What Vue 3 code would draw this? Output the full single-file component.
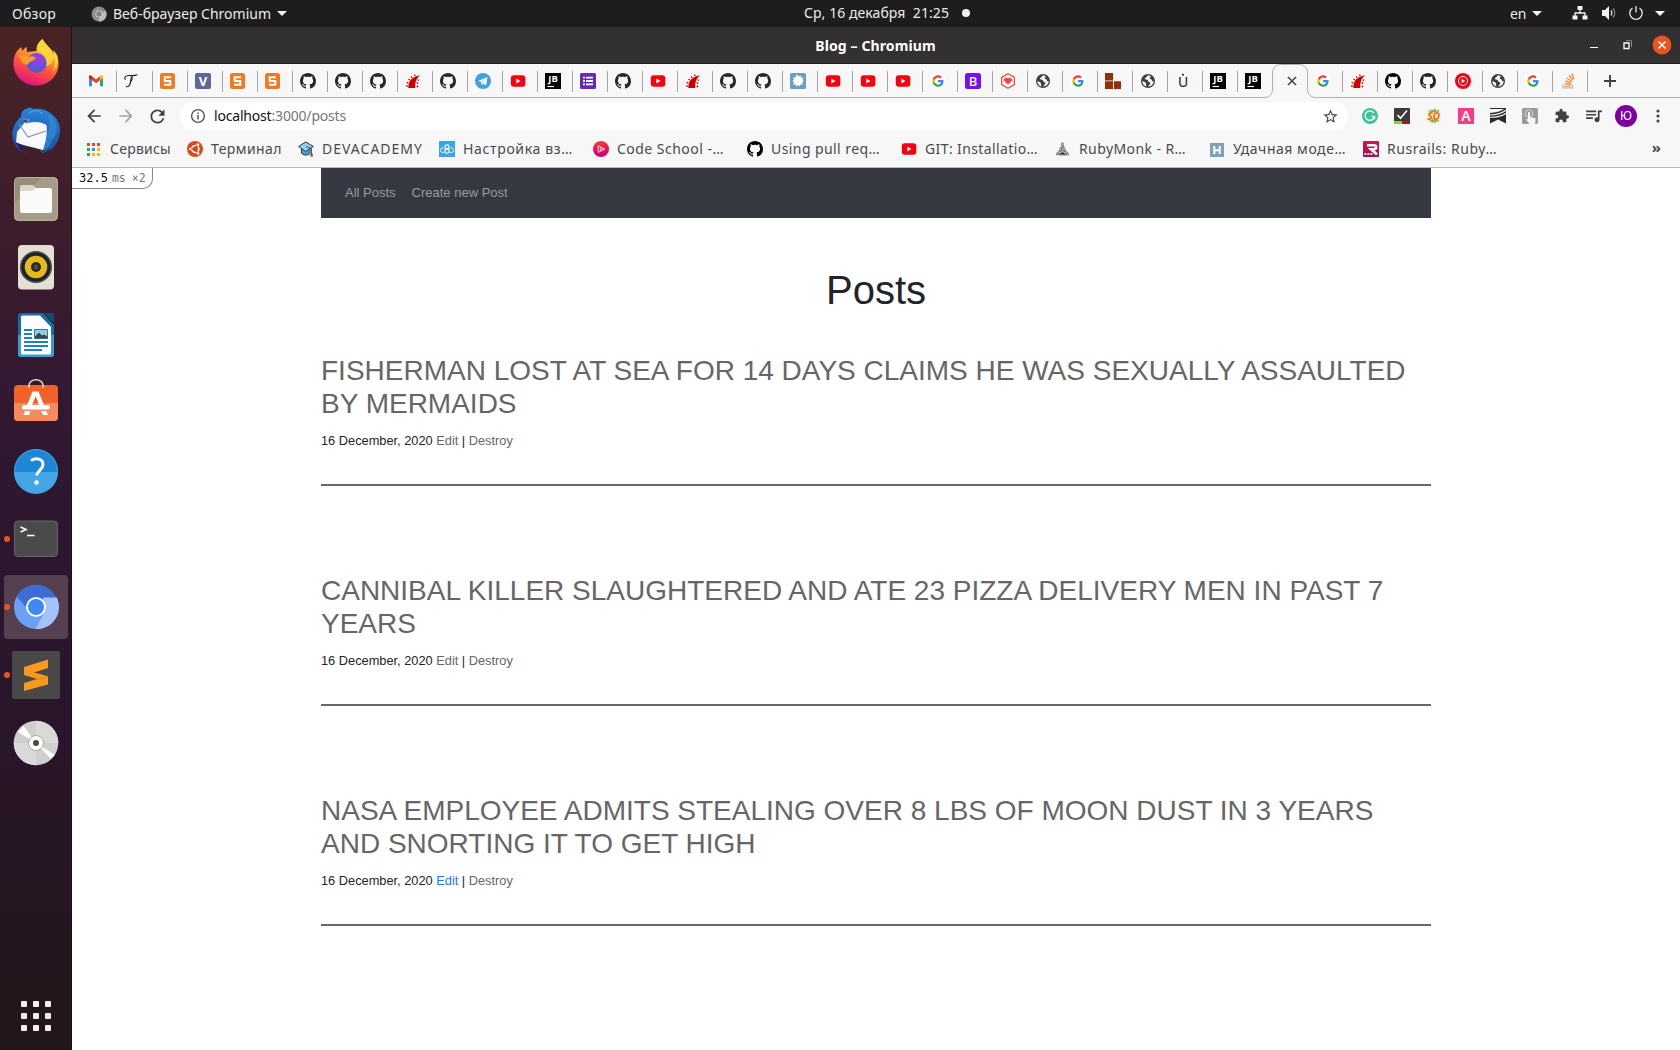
<script setup>
const octocat = 'M8 0C3.58 0 0 3.58 0 8c0 3.54 2.29 6.53 5.47 7.59.4.07.55-.17.55-.38 0-.19-.01-.82-.01-1.49-2.01.37-2.53-.49-2.69-.94-.09-.23-.48-.94-.82-1.13-.28-.15-.68-.52-.01-.53.63-.01 1.08.58 1.23.82.72 1.21 1.87.87 2.33.66.07-.52.28-.87.51-1.07-1.78-.2-3.64-.89-3.64-3.95 0-.87.31-1.59.82-2.15-.08-.2-.36-1.02.08-2.12 0 0 .67-.21 2.2.82.64-.18 1.32-.27 2-.27s1.36.09 2 .27c1.53-1.04 2.2-.82 2.2-.82.44 1.1.16 1.92.08 2.12.51.56.82 1.27.82 2.15 0 3.07-1.87 3.75-3.65 3.95.29.25.54.73.54 1.48 0 1.07-.01 1.93-.01 2.2 0 .21.15.46.55.38A8.01 8.01 0 0 0 16 8c0-4.42-3.58-8-8-8z'
const sans = 'font-family="Noto Sans, sans-serif"'

// 16x16 site icons, shared by the tab strip and the bookmarks bar
const icons = {
  gmail: '<path d="M1 4v9.200h3V7z" fill="#4285f4"/><path d="M15 4v9.200h-3V7z" fill="#34a853"/><path d="M1 3.600C1 2.300 2.600 2 3.400 2.800L4 3.300v4L1 5.200z" fill="#c5221f"/><path d="M15 3.600c0-1.300-1.600-1.600-2.400-.8l-.6.5v4l3-2.100z" fill="#fbbc04"/><path d="M4 3.300l4 3 4-3v4l-4 3-4-3z" fill="#ea4335"/>',
  script: '<g fill="none" stroke="#222" stroke-linecap="round"><path d="M1.200 6.500C0 4.500 1.500 2.600 4.500 2.500c3-.1 5.500.8 8.500-.7" stroke-width="1.100"/><path d="M8.300 3C6.500 5 7 8 6 11c-.8 2.300-2.300 3.200-3.500 2.500" stroke-width="1.200"/><path d="M8.500 5.500L6.300 10" stroke-width="1"/></g>',
  s: `<rect width="15" height="16" rx="2.500" fill="#ee7a22"/><path d="M11 4.300H4.700v3.600h5.600v3.800H4" fill="none" stroke="#fff" stroke-width="2"/>`,
  v: `<rect width="16" height="16" rx="2" fill="#62659a"/><text x="8" y="12.700" font-size="13" font-weight="700" text-anchor="middle" fill="#fff" ${sans}>V</text>`,
  gh: `<path d="${octocat}" fill="#24292e"/>`,
  ghb: `<path d="${octocat}" fill="#000"/>`,
  rails: '<path d="M3.300 15c0-6 2.500-11.500 12.200-12.700-4.200 2.700-5.600 7-5.200 12.700z" fill="#c00"/><path d="M4.800 7L3.500 6M7 4.800l-.6-1.600M10 3.200l-.2-1.700M3.400 9.800l-1.800-.3M2.700 13H1.100M12.800 6.800l1.300.5M11.600 10h1.500M11.600 13.500h1.600" stroke="#c00" stroke-width="1.300"/>',
  tg: '<circle cx="8" cy="8" r="8" fill="#40a2df"/><path d="M3.200 7.900l9.300-4-1.500 8.600-2.700-1.900-1.400 1.500-.7-3z" fill="#fff"/><path d="M6.200 9.100l4.300-3.300-3.400 4.200z" fill="#a9cfe8"/>',
  yt: '<rect x=".8" y="2.300" width="14.500" height="11.500" rx="3" fill="#f7000f"/><path d="M6.300 5.500v5l4.200-2.500z" fill="#fff"/>',
  jb: `<rect width="16" height="16"/><text x="8" y="9" font-size="9.500" font-weight="700" text-anchor="middle" fill="#fff" font-family="Open Sans, sans-serif">JB</text><path d="M2.500 13.500h6.500" stroke="#fff" stroke-width="1.200"/>`,
  list: '<rect width="16" height="16" rx="1.500" fill="#672ab8"/><path d="M3 4.700h2M3 8h2M3 11.300h2M6 4.700h7M6 8h7M6 11.300h7" stroke="#fff" stroke-width="1.800"/>',
  splat: '<rect width="16" height="16" rx="1.500" fill="#6b9fc0"/><path d="M8 2l.9 1.600L11 2.500l.2 2.200 2.300.1-1.100 2.100 1.600 1.700-2 .8.700 2.500-2.300-.6L9.300 13.500 8 12l-2 1.600-.4-2.400-2.600.4 1-2.300L2.300 8l1.800-1.200L3 4.500l2.300.3L6 2.600z" fill="#fff"/>',
  google: '<circle cx="8" cy="8" r="8" fill="#fff"/><g transform="translate(1.700 1.700) scale(.525)"><path d="M22.560 12.250c0-.78-.07-1.530-.2-2.250H12v4.260h5.920c-.26 1.370-1.040 2.530-2.210 3.310v2.770h3.570c2.080-1.920 3.280-4.740 3.280-8.090z" fill="#4285f4"/><path d="M12 23c2.970 0 5.460-.98 7.280-2.660l-3.570-2.770c-.98.66-2.230 1.060-3.710 1.060-2.860 0-5.290-1.930-6.160-4.530H2.180v2.840C3.990 20.530 7.700 23 12 23z" fill="#34a853"/><path d="M5.840 14.090c-.22-.66-.35-1.360-.35-2.090s.13-1.430.35-2.090V7.070H2.180C1.430 8.550 1 10.220 1 12s.43 3.450 1.180 4.930l2.850-2.220z" fill="#fbbc05"/><path d="M12 5.380c1.620 0 3.060.56 4.210 1.640l3.150-3.150C17.450 2.090 14.970 1 12 1 7.700 1 3.990 3.470 2.180 7.070l3.660 2.840c.87-2.600 3.300-4.530 6.160-4.530z" fill="#ea4335"/></g>',
  boot: `<rect width="16" height="16" rx="2.500" fill="#7510f5"/><text x="8" y="12.800" font-size="13" font-weight="500" text-anchor="middle" fill="#fff" ${sans}>B</text>`,
  hex: '<path d="M8 .8l6.300 3.600v7.200L8 15.200l-6.300-3.600V4.400z" fill="#fff" stroke="#ec4b3d" stroke-width="1.300"/><path d="M5.300 4.800h5.400l2 2.300L8 11.800 3.300 7.100z" fill="#ec4b3d"/>',
  globe: '<circle cx="8" cy="8" r="7" fill="#3c4043"/><path d="M8.800 2.200c-2 .2-1.500 1.800-3 2.300-1.300.5-1.200 1.900.2 2 1.600.1 2 .8 2.400 2 .5 1.200 2 .4 2 1.700 0 1.500-1.900 1.300-2.300 3.300 3.500-.2 5.600-2.600 5.600-5.500-.9.700-1.700.2-1.800-.8-.1-1.200-1.600-.6-2.200-1.600-.5-1 1-1 1-1.900 0-.6-.9-.8-1.900-1.500zM2.300 8.200c1.500.2 3.500.8 3.700 2.300.2 1.300 0 2 .4 2.900C4 12.800 2.200 10.800 2.300 8.200z" fill="#f7f7f7"/>',
  bricks: '<path d="M0 0h8v7.500H0zM0 8.300h8V16H0zM9 8.300h7V16H9z" fill="#932f08"/>',
  u: `<text x="8" y="14" font-size="14" text-anchor="middle" fill="#15152b" ${sans}>U</text><circle cx="8" cy="1.700" r="1" fill="#15152b"/>`,
  ytm: '<circle cx="8" cy="8" r="8" fill="#f7000f"/><circle cx="8" cy="8" r="4.500" fill="none" stroke="#fff" stroke-width="1"/><path d="M6.600 5.700v4.600l3.600-2.300z" fill="#fff"/>',
  so: '<path d="M3 11.500v3.300h9.500v-3.300" fill="none" stroke="#bcbbbb" stroke-width="1.200"/><g stroke="#f48024" stroke-width="1.200"><path d="M4.500 13h6.600M4.600 10.600l6.500.8M5.300 7.900l6 2.100M6.800 4.900l5.100 3.700M9 2.200l3.900 5M12 .5l1.700 5.500"/></g>',
  apps: '<path d="M1 2h3v3H1zM6 2h3v3H6zM11 2h3v3h-3z" fill="#ea4335"/><path d="M1 7h3v3H1zM1 12h3v3H1z" fill="#34a853"/><path d="M6 7h3v3H6z" fill="#4285f4"/><path d="M11 7h3v3h-3zM6 12h3v3H6zM11 12h3v3h-3z" fill="#f6b70c"/>',
  ubuntu: '<circle cx="8" cy="8" r="8" fill="#dd4814"/><circle cx="8.300" cy="8" r="3.500" fill="none" stroke="#fff" stroke-width="1.700"/><path d="M8.300 8L4 8M8.300 8l2.800 4.500M8.300 8l2.800-4.500" stroke="#dd4814" stroke-width="1.500"/><circle cx="8.300" cy="8" r="2" fill="#dd4814"/><circle cx="3.200" cy="8" r="1.300" fill="#fff"/><circle cx="11" cy="3.600" r="1.300" fill="#fff"/><circle cx="11" cy="12.400" r="1.300" fill="#fff"/>',
  academy: '<path d="M3.500 7v5c1.500 2.300 5.500 3 8.500.6V7z" fill="#4a9fd8" stroke="#333" stroke-width="1"/><path d="M.6 5.500L7.700 1l7.700 4.500-7.700 5z" fill="#8fd0f5" stroke="#333" stroke-width="1"/><path d="M8 5.500l5.500 2v6" fill="none" stroke="#444" stroke-width=".9"/><path d="M12.300 15.500l.5-3.500h1.500l.7 3.500z" fill="#555"/>',
  cloud: `<rect width="16" height="16" fill="#39a5e2"/><path d="M5 11.500H3.700a2.300 2.300 0 010-4.600H5M11 11.500h1.300a2.300 2.300 0 000-4.600H11" fill="none" stroke="#fff" stroke-width=".8"/><circle cx="8" cy="5.900" r="2" fill="none" stroke="#fff" stroke-width="1.100"/><circle cx="8" cy="10" r="2.200" fill="none" stroke="#fff" stroke-width="1.100"/>`,
  school: '<defs><linearGradient id="cs" x2="0" y2="1"><stop stop-color="#e8442e"/><stop offset=".6" stop-color="#e30b5d"/><stop offset="1" stop-color="#c8007e"/></linearGradient></defs><circle cx="8" cy="8" r="8" fill="url(#cs)"/><path d="M5.200 4.800v6.600l6.800-3.300zM7.300 6.500v3.300M9 7.200v1.800" fill="none" stroke="#fff" stroke-width=".8" stroke-linejoin="round"/>',
  monk: '<path d="M7.500 1.500c1.800 0 1.800 2.500 1.300 4 1.800.8 2 3 2.300 4.500 2 .8 3.700 2.600 2.700 4.300H1.200C.2 12.600 1.900 11 3.900 10c.3-1.500.3-3.700 2.300-4.500-.5-1.500-.5-4 1.300-4z" fill="#8b8b8b"/><path d="M5 8l5 4.500M10 7l-5 5.500M2.700 12.800l5-2 5 2M6.600 4l2-1" stroke="#d0d0ca" stroke-width=".9"/><path d="M5.700 9.500l4 .5M3.700 13.700l8 .2" stroke="#555" stroke-width=".7"/>',
  habr: `<rect x="1" y="2" width="14" height="14" fill="#7ea3b8"/><path d="M5.300 5v8M10.700 5v8M5 9.200h6" stroke="#fff" stroke-width="2" fill="none"/>`,
  rus: '<defs><linearGradient id="rr" x2="0" y2="1"><stop stop-color="#d8143c"/><stop offset="1" stop-color="#a0105a"/></linearGradient></defs><rect width="16" height="16" rx="1" fill="url(#rr)"/><path d="M4 4.200h7c2.800 0 2.800 4 0 4H8l6 5.300" fill="none" stroke="#fff" stroke-width="2.600"/><path d="M1.500 13h1.800M4.500 13h1.800M7.500 13h1.800" stroke="#fff" stroke-width="1.800"/>',
  grammarly: '<circle cx="8" cy="8" r="8" fill="#3cc499"/><path d="M11.800 5A4.700 4.700 0 1012.500 8.500H9.300M12.500 8.200v3" fill="none" stroke="#fff" stroke-width="1.400"/>',
  check: '<rect width="16" height="16" rx="1" fill="#3b3b3b"/><path d="M0 13h8v3H0z" fill="#9ad011"/><path d="M8 13h8v3H8z" fill="#b5121b"/><path d="M3.500 7l3 3.200L13 2.500" fill="none" stroke="#fff" stroke-width="1.600"/>',
  sq: `<path d="M2 2l2.500 1L6 1l1.500 2L9 .3 10.500 3l3-1.500L12 5H4zM2.500 14l2-3h7l2 2.500-3-.5L9 15.500 7.500 13 6 15.500 5 13z" fill="#62b52b"/><text x="7.500" y="12.200" font-size="10.500" font-weight="800" font-style="italic" text-anchor="middle" fill="#f77b0b" stroke="#f7f7f7" stroke-width=".7" paint-order="stroke" font-family="Open Sans, sans-serif" letter-spacing="-.6">SQ</text>`,
  a: `<rect width="16" height="16" fill="#fa3a85"/><text x="8" y="13" font-size="14" font-weight="600" text-anchor="middle" fill="#fff" ${sans}>A</text>`,
  ribbon: '<path d="M0 0h16v15.500l-8-4-8 4z" fill="#2b2b2b"/><path d="M0 1h14C11 3.500 5 4.500 0 5z" fill="#f7f7f7"/><path d="M0 7c6-.2 12-1.500 16-4.700M0 9.300c6 0 12-1 16-4" fill="none" stroke="#f2f2f2" stroke-width="1.100"/>',
  touch: '<rect width="16" height="16" rx="1.500" fill="#9b9b9b"/><circle cx="7" cy="5.500" r="3.700" fill="none" stroke="#cacaca" stroke-width="1.200"/><path d="M6 5c0-1.200 2-1.200 2 0v4l4.500 1c1 .3 1.200 1 1 2L13 16H7.500L4.500 12c-.6-1 .4-1.600 1.500-.6z" fill="#f5f8fb"/>',
  puzzle: '<path transform="translate(.3 .2) scale(.64)" d="M20.500 11H19V7c0-1.100-.9-2-2-2h-4V3.500C13 2.120 11.880 1 10.500 1S8 2.120 8 3.500V5H4c-1.100 0-1.990.9-1.990 2v3.800H3.500c1.490 0 2.700 1.210 2.700 2.700s-1.210 2.700-2.700 2.700H2V20c0 1.100.9 2 2 2h3.800v-1.500c0-1.490 1.210-2.700 2.700-2.700s2.700 1.210 2.700 2.700V22H17c1.100 0 2-.9 2-2v-4h1.500c1.380 0 2.500-1.120 2.500-2.500S21.880 11 20.500 11z" fill="#3f4043"/>',
  queue: '<path transform="translate(-2.400 -2.500) scale(.84)" d="M15 6H3v2h12V6zm0 4H3v2h12v-2zM3 16h8v-2H3v2zM17 6v8.180c-.31-.11-.65-.18-1-.18-1.660 0-3 1.340-3 3s1.340 3 3 3 3-1.340 3-3V8h3V6h-5z" fill="#3f4043"/>',
}

const tabsBefore = ['s', 'v', 's', 's', 'gh', 'gh', 'gh', 'rails', 'gh', 'tg', 'yt', 'jb', 'list', 'gh', 'yt', 'rails', 'gh', 'gh', 'splat', 'yt', 'yt', 'yt', 'google', 'boot', 'hex', 'globe', 'google', 'bricks', 'globe', 'u', 'jb', 'jb']
const tabsAfter = ['google', 'rails', 'ghb', 'gh', 'ytm', 'globe', 'google', 'so']
const extensions = ['grammarly', 'check', 'sq', 'a', 'ribbon', 'touch', 'puzzle', 'queue']

const bookmarks = [
  { icon: 'apps', label: 'Сервисы', width: 101, text: 61 },
  { icon: 'ubuntu', label: 'Терминал', width: 111, text: 71 },
  { icon: 'academy', label: 'DEVACADEMY', width: 141, text: 101 },
  { icon: 'cloud', label: 'Настройка вз…', width: 154, text: 110 },
  { icon: 'school', label: 'Code School -…', width: 154, text: 107 },
  { icon: 'ghb', label: 'Using pull req…', width: 154, text: 109 },
  { icon: 'yt', label: 'GIT: Installatio…', width: 154, text: 113 },
  { icon: 'monk', label: 'RubyMonk - R…', width: 154, text: 107 },
  { icon: 'habr', label: 'Удачная моде…', width: 154, text: 113 },
  { icon: 'rus', label: 'Rusrails: Ruby…', width: 154, text: 110 },
]

// 48x48 launcher icons
const dock = [
  { id: 'firefox', art: '<defs><linearGradient id="ff" x1=".8" y1="0" x2=".4" y2="1"><stop stop-color="#fff44f"/><stop offset=".3" stop-color="#ffb92e"/><stop offset=".6" stop-color="#ff5b36"/><stop offset="1" stop-color="#e5127f"/></linearGradient><radialGradient id="fp" cx=".6" cy=".3"><stop stop-color="#a838e8"/><stop offset="1" stop-color="#5b57d9"/></radialGradient></defs><path d="M30.500 0c-6 5-6 8-6 12L15 13c-.5-2-.5-3 0-5-3 1-4.500 4-4.500 4-1-2-1-3-1-4C3 12 1.500 19 1.500 24.500 1.500 37 11.500 46.500 24 46.500S46.500 37 46.500 25c0-6-2.500-10.500-5-13 .5 1.500.5 2 .5 4C40 9 33 6 30.500 0z" fill="url(#ff)"/><path d="M30.500 0c-6 5-6 9-3.500 13 5 2 9 7 7 14 6-1 8-6 7-11 3 5 2 12-1 17 5-4 6.500-9 6-14-.5-3-2.500-6-4.500-8v4C40 9 33 6 30.500 0z" fill="#ffd83d" opacity=".8"/><circle cx="24.500" cy="24" r="10" fill="url(#fp)"/><path d="M6 17c4-2 8-1 10 1 3-1 6-1 8 1-2 3-6 3-8 6-2 2-6 0-7-4z" fill="#ff9d28"/>' },
  { id: 'mail', art: '<defs><linearGradient id="tb" x2="0" y2="1"><stop stop-color="#2a83d8"/><stop offset="1" stop-color="#1b4fa5"/></linearGradient></defs><path d="M18 0.500c-6 1-9 4-9 9C3 15-.5 22 .5 31c3 9 6 13 13 15-3-3-5-5-5-8l24 5c-1 2-2 2-4 3 4 0 8-2 10-6-1 3-1 4-3 5 8-4 13-14 12.500-23C47 9 34 0 22 2z" fill="url(#tb)"/><path d="M33 5c5 5 6 14 2 22s-1 13-8 18c10-2 13-9 13-12 5-5 6-13 3-19-2-4-6-7-10-9z" fill="#3a9be0" opacity=".5"/><path d="M5 25l8-10c1 1 2 1.500 3 1 6-2 14-1 18.500 2 1 6 0 15-3.500 25L4 36z" fill="#f7f9fc"/><path d="M7 17l9 13 18-6" fill="none" stroke="#8c959e" stroke-width="1.200"/><path d="M3.500 35c2 5 5 9 9 11-2-3-2-5-2-8z" fill="#2b1c68"/><path d="M12 12l3 4 2-3zM17 6c6-4 11-2 14 1" fill="none" stroke="#4f9fe0" stroke-width="1.300"/><circle cx="13.500" cy="14" r="1.600" fill="#6a3b36"/>' },
  { id: 'files', art: '<rect x="2.500" y="2.500" width="43" height="43" rx="4" fill="#968d7b"/><path d="M2.500 28L30 2.500h12a3.500 3.500 0 013.500 3.500v36a3.500 3.500 0 01-3.500 3.500H6A3.500 3.500 0 012.500 42z" fill="#aaa28f" opacity=".7"/><rect x="2.500" y="2.500" width="43" height="43" rx="4" fill="none" stroke="#b8b09f"/><path d="M8 12a2 2 0 012-2h11l3 3v5H8z" fill="#dcd7cb"/><path d="M8 16h12l4-3h14a2 2 0 012 2v21a2 2 0 01-2 2H10a2 2 0 01-2-2z" fill="#fafaf8"/>' },
  { id: 'music', art: '<rect x="6" y="2" width="36" height="44.500" rx="4" fill="#e4dfd4"/><circle cx="24" cy="24" r="16" fill="#4a4a4e"/><circle cx="24" cy="24" r="14.500" fill="#1f2229"/><circle cx="24" cy="24" r="11.300" fill="#e6b91c"/><circle cx="24" cy="24" r="5" fill="#252726"/><circle cx="24" cy="24" r="2.500" fill="#4a4a4a"/>' },
  { id: 'writer', art: '<path d="M6 5a3 3 0 013-3h22l11 12v29a3 3 0 01-3 3H9a3 3 0 01-3-3z" fill="#156da0"/><path d="M6 24h36v19a3 3 0 01-3 3H9a3 3 0 01-3-3z" fill="#3c9bd1"/><path d="M9 6a1.500 1.500 0 011.500-1.500H28L39 16v26a1.500 1.500 0 01-1.500 1.500h-27A1.500 1.500 0 019 42z" fill="#fff"/><path d="M32 2h10v10z" fill="#104d73"/><path d="M12 19h8M12 23h8M12 27h8M12 31h24M12 35h24M12 39h18" stroke="#1b82bd" stroke-width="1.800"/><path d="M22.500 18.500h13v9h-13z" fill="#8fcdf0" stroke="#1b82bd"/><path d="M23 27.500v-2l4-4 3 3 2-1 3.500 2v2z" fill="#454545"/><circle cx="32.500" cy="21" r="1.300" fill="#f6b334"/>' },
  { id: 'software', art: '<rect x="2" y="6" width="44" height="36" rx="4" fill="#f0622a"/><path d="M2 24h44v14a4 4 0 01-4 4H6a4 4 0 01-4-4z" fill="#f58a5c"/><path d="M17 9V6.500a7 5.700 0 0114 0V9" fill="none" stroke="#efd2aa" stroke-width="1.600"/><path d="M20.500 12.500h6L32 26h-5l-3.300-9L20 26h-5zM13 32h5.500L17 36h-5.500zM29 32h5.500L36 36h-5z" fill="#fff"/><rect x="10" y="26" width="28" height="4.500" rx="2" fill="#fff"/>' },
  { id: 'help', art: '<circle cx="24" cy="24" r="22" fill="#1e88d8"/><path d="M2 25h44a22 22 0 01-44 0z" fill="#45a5e5"/><circle cx="24" cy="24" r="21.500" fill="none" stroke="#3c9de2"/><path d="M19 13.500c5-3 12-2 12 4 0 5-6 6-6.300 11" fill="none" stroke="#fff" stroke-width="3"/><circle cx="24.500" cy="35.500" r="2.300" fill="#fff"/>' },
  { id: 'terminal', running: true, art: '<rect x="2.500" y="6" width="43" height="35.500" rx="3.500" fill="#4a4a4a" stroke="#656565"/><path d="M8.500 12l5.500 2.500-5.500 2.500M15 20.500h7.500" fill="none" stroke="#fff" stroke-width="1.600"/>' },
  { id: 'chromium', running: true, active: true, art: '<circle cx="24" cy="24" r="22" fill="#6aa0f5"/><path d="M4.500 13.500A22 22 0 0144.600 16H24v8H14z" fill="#3e6cd6"/><path d="M44.800 14.500A22 22 0 0123.500 46L33 28l-2-13.500z" fill="#a3c3fa"/><circle cx="24" cy="24" r="10" fill="#fff"/><circle cx="24" cy="24" r="8" fill="#4386f5"/>' },
  { id: 'sublime', running: true, art: '<rect width="48" height="48" rx="2" fill="#484848"/><path d="M12 16l24-7.500V17l-14 4.500 14 3.800V33.500L12 40v-8l13-4-13-4z" fill="#f99a20"/><path d="M25 28l11-3.500v2L12 32l0 0z" fill="#d87c12" opacity=".6"/>' },
  { id: 'disc', art: '<circle cx="24" cy="24" r="22.300" fill="#cfcfcf"/><path d="M24 1.700V24H46.300A22.300 22.300 0 0024 1.700zM24 46.300V24H1.700A22.300 22.300 0 0024 46.300z" fill="#d9d9d9"/><path d="M6 13l18 11L11.500 7zM43 36L24 24l14.500 15.500z" fill="#fff"/><circle cx="24" cy="24" r="7.500" fill="#fff" stroke="#b4a98f"/><circle cx="24" cy="24" r="3" fill="#4a4a4a"/>' },
]

const posts = [
  { title: 'Fisherman lost at sea for 14 days claims he was sexually assaulted by mermaids' },
  { title: 'Cannibal killer slaughtered and ate 23 pizza delivery men in past 7 years' },
  { title: 'NASA employee admits stealing over 8 lbs of moon dust in 3 years and snorting it to get high', hovered: true },
]

// Tracks a label so that it fills the given width in pixels
const vFit = {
  mounted(el, { value }) {
    const natural = el.getBoundingClientRect().width
    el.style.letterSpacing = `${(value - natural) / el.textContent.length}px`
  },
}
</script>

<template>
  <div class="desktop">
    <header class="panel">
      <span v-fit="44" class="activities">Обзор</span>
      <div class="app-menu">
        <svg width="16" height="16" viewBox="0 0 16 16"><circle cx="8" cy="8" r="7.500" fill="#8d8d8d" /><path d="M8 8l7-3A7.500 7.500 0 018 15.500z" fill="#bbb" /><circle cx="8" cy="8" r="3.600" fill="#d2d2d2" /><circle cx="8" cy="8" r="2.700" fill="#808080" /></svg>
        <span v-fit="158">Веб-браузер Chromium</span>
        <i class="caret"></i>
      </div>
      <div class="clock"><span v-fit="145">Ср, 16 декабря&nbsp; 21:25</span><i class="notice"></i></div>
      <div class="tray">
        <span v-fit="16.500">en</span><i class="caret lang"></i>
        <svg class="net" width="16" height="16" viewBox="0 0 16 16"><path d="M5.500 1h5v4h-5zM.5 10.500h5v4h-5zM10.500 10.500h5v4h-5z" fill="#f2f2f2" /><path d="M8 4v4M3 11V8h10v3" fill="none" stroke="#f2f2f2" stroke-width="1.300" /></svg>
        <svg class="vol" width="16" height="16" viewBox="0 0 16 16"><path d="M1 5h3l4-4v14l-4-4H1z" fill="#f2f2f2" /><path d="M9.800 5.500a3.500 3.500 0 010 5" fill="none" stroke="#f2f2f2" stroke-width="1.200" /><path d="M12 3.500a6.500 6.500 0 010 9" fill="none" stroke="#888" stroke-width="1.200" /></svg>
        <svg class="power" width="16" height="16" viewBox="0 0 16 16"><path d="M4.500 3a6.200 6.200 0 107 0M8 1v6.500" fill="none" stroke="#e8e8e8" stroke-width="1.300" /></svg>
        <i class="caret"></i>
      </div>
    </header>

    <div class="workspace">
      <aside class="dock">
        <div v-for="item in dock" :key="item.id" class="launcher" :class="{ active: item.active }">
          <i v-if="item.running" class="running"></i>
          <svg width="48" height="48" viewBox="0 0 48 48" v-html="item.art"></svg>
        </div>
        <div class="show-apps"><i v-for="n in 9" :key="n"></i></div>
      </aside>

      <section class="window">
        <div class="titlebar">
          <span v-fit="120.500">Blog – Chromium</span>
          <div class="controls">
            <i class="minimize"></i>
            <svg width="10" height="10" viewBox="0 0 10 10"><path d="M1 3h5v5.500H1z" fill="none" stroke="#fff" stroke-width="1.300" /><path d="M3 .7h5.500V7" fill="none" stroke="#8c8a8b" /></svg>
            <svg width="20" height="20" viewBox="0 0 20 20"><circle cx="10" cy="10" r="9.400" fill="#e95420" /><path d="M6.500 6.500l7 7M13.500 6.500l-7 7" stroke="#fff" stroke-width="1.500" /></svg>
          </div>
        </div>

        <div class="tabs">
          <div class="tab first"><svg width="16" height="16" viewBox="0 0 16 16" v-html="icons.gmail"></svg></div>
          <div class="tab second"><svg width="16" height="16" viewBox="0 0 16 16" v-html="icons.script"></svg></div>
          <div v-for="(name, i) in tabsBefore" :key="'b' + i" class="tab"><svg width="16" height="16" viewBox="0 0 16 16" v-html="icons[name]"></svg></div>
          <div class="tab current">
            <svg class="outline" width="52" height="34" viewBox="0 0 52 34"><path d="M0 33.500c5 0 8.500-3 8.500-8V9c0-5 3-8.500 8-8.500h19c5 0 8 3.500 8 8.500v16.500c0 5 3.500 8 8.500 8V35H0z" fill="#f7f7f7" /><path d="M0 33.500c5 0 8.500-3 8.500-8V9c0-5 3-8.500 8-8.500h19c5 0 8 3.500 8 8.500v16.500c0 5 3.500 8 8.500 8" fill="none" stroke="#adadad" /></svg>
            <svg class="close" width="10" height="10" viewBox="0 0 10 10"><path d="M1 1l8 8M9 1L1 9" stroke="#45474a" stroke-width="1.600" /></svg>
          </div>
          <div v-for="(name, i) in tabsAfter" :key="'a' + i" class="tab"><svg width="16" height="16" viewBox="0 0 16 16" v-html="icons[name]"></svg></div>
          <div class="tab new"><svg width="12" height="12" viewBox="0 0 12 12"><path d="M6 0v12M0 6h12" stroke="#3c4043" stroke-width="1.900" /></svg></div>
        </div>

        <div class="toolbar">
          <div class="history">
            <svg width="20" height="20" viewBox="0 0 24 24"><path d="M20 11H7.830l5.590-5.590L12 4l-8 8 8 8 1.410-1.410L7.830 13H20v-2z" fill="#3c4043" /></svg>
            <svg width="20" height="20" viewBox="0 0 24 24"><path d="M4 11h12.170l-5.590-5.590L12 4l8 8-8 8-1.410-1.410L16.170 13H4v-2z" fill="#a4a5a7" /></svg>
            <svg width="21" height="21" viewBox="0 0 24 24"><path d="M17.650 6.350A7.958 7.958 0 0012 4c-4.420 0-7.990 3.580-7.990 8s3.570 8 7.990 8c3.730 0 6.840-2.550 7.730-6h-2.080A5.990 5.990 0 0112 18c-3.310 0-6-2.690-6-6s2.690-6 6-6c1.660 0 3.140.69 4.220 1.780L13 11h7V4l-2.350 2.350z" fill="#3c4043" /></svg>
          </div>
          <div class="omnibox">
            <svg width="16" height="16" viewBox="0 0 16 16"><circle cx="8" cy="8" r="6.400" fill="none" stroke="#505256" stroke-width="1.400" /><path d="M8 7v4.500M8 4.400v1.500" stroke="#505256" stroke-width="1.500" /></svg>
            <span v-fit="57.500" class="host">localhost</span><span v-fit="74.500" class="path">:3000/posts</span>
            <svg class="star" width="17" height="17" viewBox="0 0 24 24"><path d="M22 9.240l-7.190-.62L12 2 9.190 8.630 2 9.240l5.460 4.730L5.820 21 12 17.270 18.180 21l-1.630-7.030L22 9.240zM12 15.400l-3.760 2.270 1-4.280-3.320-2.880 4.380-.38L12 6.100l1.710 4.040 4.380.38-3.320 2.880 1 4.280L12 15.400z" fill="#45474a" /></svg>
          </div>
          <div class="extensions">
            <svg v-for="name in extensions" :key="name" width="16" height="16" viewBox="0 0 16 16" v-html="icons[name]"></svg>
          </div>
          <span class="avatar">Ю</span>
          <svg class="kebab" width="4" height="14" viewBox="0 0 4 14"><circle cx="2" cy="2" r="1.600" fill="#45474a" /><circle cx="2" cy="7" r="1.600" fill="#45474a" /><circle cx="2" cy="12" r="1.600" fill="#45474a" /></svg>
        </div>

        <nav class="bookmarks">
          <a v-for="b in bookmarks" :key="b.label" :style="{ width: b.width + 'px' }">
            <svg width="16" height="16" viewBox="0 0 16 16" v-html="icons[b.icon]"></svg>
            <span v-fit="b.text">{{ b.label }}</span>
          </a>
          <b class="more">»</b>
        </nav>

        <main class="page">
          <div class="profiler"><span>32.5</span><small class="unit">ms</small><small class="count">×2</small></div>
          <div class="container">
            <nav class="navbar"><a>All Posts</a><a>Create new Post</a></nav>
            <h1>Posts</h1>
            <article v-for="post in posts" :key="post.title">
              <h3>{{ post.title }}</h3>
              <p>16 December, 2020 <a :class="{ hovered: post.hovered }">Edit</a> | <a>Destroy</a></p>
            </article>
          </div>
        </main>
      </section>
    </div>
  </div>
</template>

<style>
body { margin: 0; overflow: hidden; }
</style>

<style scoped>
* { box-sizing: border-box; }
.desktop { width: 1680px; height: 1050px; display: flex; flex-direction: column; overflow: hidden; font: 14px/20px "Noto Sans", sans-serif; }
svg { display: block; flex: none; }
span { white-space: nowrap; }

.panel { height: 27px; flex: none; display: grid; grid-template-columns: 91px 713px 1fr 170px; align-items: center; background: #1d1d1d; color: #ebebeb; }
.activities { margin-left: 12px; justify-self: start; }
.app-menu, .clock, .tray { display: flex; align-items: center; }
.clock { padding-bottom: 1px; }
.app-menu span { margin: 0 6px; }
.caret { border: 5px solid transparent; border-top-color: #f2f2f2; border-bottom: 0; }
.notice { width: 8px; height: 8px; margin-left: 13px; border-radius: 50%; background: #f2f2f2; }
.lang { margin-left: 5px; }
.net { margin-left: 30px; }
.vol, .net, .power { margin-bottom: 1px; }
.vol { margin-left: 13px; }
.power { margin-left: 11px; }
.power + .caret { margin-left: 11px; }

.workspace { flex: 1; display: flex; min-height: 0; }
.dock { width: 72px; display: flex; flex-direction: column; align-items: center; padding-top: 2px; box-shadow: inset -1px 0 #1c0f18; background: linear-gradient(#4a2324, #3f1e2b 16%, #331931 34%, #2c172e 50%, #2a162b 68%, #251622 84%, #22161a); }
.launcher { position: relative; width: 64px; height: 64px; margin: 2px 0; border-radius: 4px; display: grid; place-items: center; }
.launcher.active { background: #54404f; }
.running { position: absolute; left: 0; top: 29px; width: 6px; height: 6px; border-radius: 50%; background: #e95420; }
.show-apps { margin: auto 0 19px; display: grid; grid-template-columns: repeat(3, 6px); gap: 6px; }
.show-apps i { height: 6px; border-radius: 1px; background: #f0f0ec; }

.window { flex: 1; min-width: 0; display: flex; flex-direction: column; background: #f7f7f7; }
.titlebar { height: 37px; display: grid; grid-template-columns: 1fr auto 1fr; align-items: center; border-bottom: 1px solid #1f1d1e; background: #323031; color: #fff; font-weight: 700; }
.titlebar > span { grid-column: 2; margin: 2px 1px 0 0; }
.controls { justify-self: end; display: flex; align-items: center; margin-right: 8px; }
.minimize { width: 8px; height: 1px; margin: 5px 25px 0 0; background: #fff; }
.controls svg + svg { margin-left: 19px; }

.tabs { height: 34px; display: flex; border-bottom: 1px solid #b3b3b3; }
.tab { position: relative; width: 35px; height: 33px; display: flex; align-items: center; padding: 1px 0 0 8px; }
.tab::before { content: ""; position: absolute; left: 0; top: 7px; width: 1px; height: 21px; background: #a5a5a5; }
.first { width: 44px; padding-left: 16px; }
.second { width: 36px; }
.first::before, .current::before, .current + .tab::before { display: none; }
.current .close { position: relative; margin-left: 7px; }
.outline { position: absolute; left: -8px; top: 0; }
.new { padding-left: 17px; }

.toolbar { height: 32px; display: flex; align-items: center; padding-top: 4px; }
.history { width: 108px; padding-left: 12px; display: flex; align-items: center; gap: 12px; }
.history svg:last-child { margin-left: -1px; }
.omnibox { width: 1168px; height: 28px; display: flex; align-items: center; padding: 0 9px 0 10px; border-radius: 14px; background: #fff; }
.host { margin-left: 8px; color: #111; }
.path { color: #73777b; }
.star { margin-left: auto; }
.extensions { display: flex; gap: 16px; margin-left: 14px; }
.avatar { width: 22px; height: 22px; margin-left: 13px; border-radius: 50%; background: #7b00a0; color: #fff; font-size: 12px; line-height: 21px; text-align: center; }
.kebab { margin-left: 19px; }

.bookmarks { height: 38px; display: flex; align-items: center; padding-left: 14px; border-bottom: 1px solid #b9b9b9; color: #484a4d; }
.bookmarks a { display: flex; align-items: center; gap: 8px; flex: none; }
.more { margin: -3px 19px 0 auto; font-size: 15px; }

.page { position: relative; flex: 1; background: #fff; color: #212529; font-family: "Liberation Sans", Arial, sans-serif; }
.profiler { position: absolute; left: 0; top: 0; width: 81px; height: 21px; display: flex; align-items: baseline; padding: 2px 0 0 7px; border: solid #888; border-width: 0 1px 1px 0; border-bottom-right-radius: 10px; color: #111; font: 12px/16px "DejaVu Sans Mono", monospace; }
.profiler small { color: #777; font-size: 11.5px; }
.unit { margin-left: 4px; }
.count { margin-left: 6px; }
.container { width: 1110px; margin: 0 auto; }
.navbar { height: 50px; display: flex; gap: 16px; align-items: center; padding-left: 24px; background: #353841; color: #999b9e; font-size: 13px; }
h1 { margin: 48px 0 40px; font-size: 40px; line-height: 48px; font-weight: 400; text-align: center; }
article { height: 132px; margin-bottom: 88px; border-bottom: 2px solid #666; }
h3 { margin: 0; color: #666; font-size: 28px; line-height: 33px; font-weight: 400; text-transform: uppercase; }
p { margin: 11px 0 0; font-size: 12.8px; line-height: 19px; }
p a { color: #666; }
p a.hovered { color: #2e73ff; }
</style>
